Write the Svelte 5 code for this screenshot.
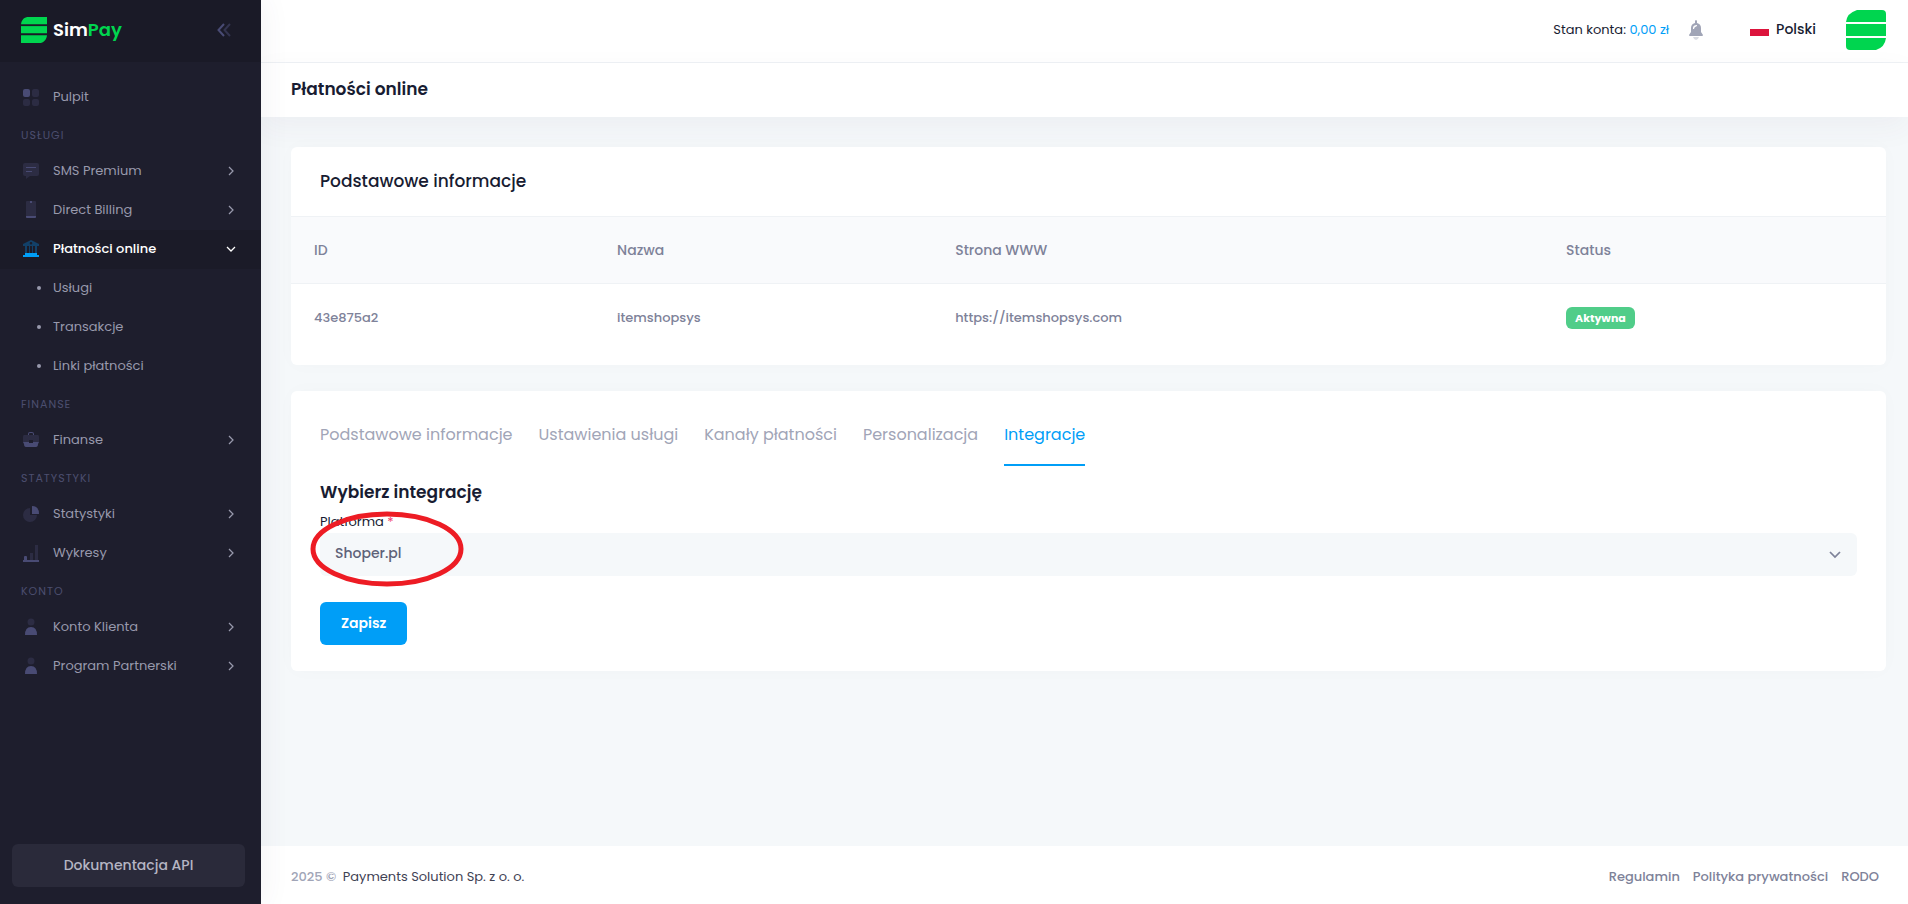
<script lang="ts">
	type Item = {label: string; icon: string; arrow?: boolean; children?: string[]};

	const sections: Array<{title?: string; items: Item[]}> = [
		{items: [{label: 'Pulpit', icon: 'grid'}]},
		{
			title: 'Usługi',
			items: [
				{label: 'SMS Premium', icon: 'chat', arrow: true},
				{label: 'Direct Billing', icon: 'phone', arrow: true},
				{label: 'Płatności online', icon: 'bank', arrow: true, children: ['Usługi', 'Transakcje', 'Linki płatności']},
			],
		},
		{title: 'Finanse', items: [{label: 'Finanse', icon: 'case', arrow: true}]},
		{
			title: 'Statystyki',
			items: [
				{label: 'Statystyki', icon: 'pie', arrow: true},
				{label: 'Wykresy', icon: 'bars', arrow: true},
			],
		},
		{
			title: 'Konto',
			items: [
				{label: 'Konto Klienta', icon: 'user', arrow: true},
				{label: 'Program Partnerski', icon: 'user', arrow: true},
			],
		},
	];

	const tabs = ['Podstawowe informacje', 'Ustawienia usługi', 'Kanały płatności', 'Personalizacja', 'Integracje'];
	const platforms = ['Shoper.pl', 'WooCommerce', 'PrestaShop'];
	const services = [{id: '43e875a2', name: 'itemshopsys', url: 'https://itemshopsys.com', status: 'Aktywna'}];

	let open = 'Płatności online';
	let tab = 'Integracje';
	let platform = 'Shoper.pl';

	function toggle(item: Item) {
		open = open === item.label ? '' : item.label;
	}
</script>

<div class="page">
	<aside class="aside">
		<div class="brand">
			<a href="#home" class="brand-logo">
				<svg width="26" height="26" viewBox="0 0 40 40" fill="#00d54f">
					<path d="M12 0H40V11H0C1 4 5 0 12 0Z" />
					<path d="M0 14H40V25H0Z" />
					<path d="M0 28H40C39 35 35 40 28 40H0Z" />
				</svg>
				<span class="brand-name">Sim<span class="green">Pay</span></span>
			</a>
			<button class="collapse" aria-label="Zwiń menu">
				<svg width="14" height="14" viewBox="0 0 14 14" fill="none" stroke-width="2">
					<path d="M13 1L7.500 7L13 13" stroke="#33344f" />
					<path d="M7 1L1.500 7L7 13" stroke="#494b74" />
				</svg>
			</button>
		</div>

		<nav class="menu">
			{#each sections as section}
				{#if section.title}
					<h4 class="menu-section">{section.title}</h4>
				{/if}
				{#each section.items as item}
					<button class="menu-link" class:active={item.children && open === item.label} on:click={() => toggle(item)}>
						<svg class="menu-icon" width="18" height="18" viewBox="0 0 18 18">
							{#if item.icon === 'grid'}
								<rect class="strong" x="1" y="1" width="7" height="8" rx="2" />
								<rect class="soft" x="10" y="1" width="7" height="8" rx="2" />
								<rect class="soft" x="1" y="11" width="7" height="7" rx="2" />
								<rect class="soft" x="10" y="11" width="7" height="7" rx="2" />
							{:else if item.icon === 'chat'}
								<path class="soft" d="M3 1H15Q17 1 17 3V12Q17 14 15 14H8L4 17V14H3Q1 14 1 12V3Q1 1 3 1Z" />
								<path class="strong" d="M4 5H14V6H4ZM4 9H10V10H4Z" />
							{:else if item.icon === 'phone'}
								<rect class="soft" x="4" y="0" width="10" height="17" rx="1" />
								<path class="strong" d="M4 15H14V16Q14 17 13 17H5Q4 17 4 16ZM8 0H10V2H8Z" />
							{:else if item.icon === 'bank'}
								<path class="soft" fill-rule="evenodd" d="M9 0L17 4V6H15V13H13V6H11V13H10V6H8V13H7V6H5V13H3V6H1V4ZM9 2A1.300 1.300 0 1 0 9 4.600A1.300 1.300 0 1 0 9 2Z" />
								<path class="strong" d="M3 13H15V15H17V17H1V15H3Z" />
							{:else if item.icon === 'case'}
								<path class="strong" d="M6 4V3Q6 1 8 1H10Q12 1 12 3V4H11V3Q11 2 10 2H8Q7 2 7 3V4Z" />
								<path class="soft" d="M2 4H16Q17 4 17 6V11H11V9H7V11H1V6Q1 4 2 4Z" />
								<path class="strong" d="M1 11H7V12H11V11H17L16 13Q16 16 14 16H4Q2 16 2 13Z" />
							{:else if item.icon === 'pie'}
								<path class="soft" d="M8 3V10H15A7 7 0 1 1 8 3Z" />
								<path class="strong" d="M10 1Q17 1 17 9H10Z" />
							{:else if item.icon === 'bars'}
								<path class="soft" d="M8 9H11V16H8ZM13 1H16V16H13Z" />
								<path class="strong" d="M2 13Q2 12 3 12H4Q5 12 5 13V16H17V18H1V16H2Z" />
							{:else}
								<circle class="soft" cx="9" cy="4" r="3.500" />
								<path class="strong" d="M3 17Q3 9 9 9Q15 9 15 17Z" />
							{/if}
						</svg>
						<span class="menu-text">{item.label}</span>
						{#if item.arrow}
							<svg class="arrow" width="10" height="10" viewBox="0 0 10 10" fill="none" stroke="currentColor" stroke-width="1.250">
								<path d="M3 1L7 5L3 9" />
							</svg>
						{/if}
					</button>
					{#if item.children && open === item.label}
						{#each item.children as child}
							<a class="menu-sub" href="#{child}"><span class="dot"></span>{child}</a>
						{/each}
					{/if}
				{/each}
			{/each}
		</nav>

		<a class="api" href="#api">Dokumentacja API</a>
	</aside>

	<div class="wrapper">
		<header class="topbar">
			<span class="balance">Stan konta: <span class="blue">0,00 zł</span></span>
			<button class="bell" aria-label="Powiadomienia">
				<svg width="14" height="20" viewBox="0 0 14 20" fill="#a1a5b7">
					<path d="M4 17H10Q9 20 7 20Q5 20 4 17Z" opacity=".4" />
					<path fill-rule="evenodd" d="M6 1Q7 -1 8 1V3Q12 4 12 8V12L14 15Q14 16 13 16H1Q0 16 0 15L2 12V8Q2 4 6 3ZM4 8Q4 5 8 5V6Q5 7 5 9H4Z" />
				</svg>
			</button>
			<button class="language">
				<svg width="19" height="14" viewBox="0 0 19 14">
					<rect width="19" height="7" fill="#fff" />
					<rect y="7" width="19" height="7" fill="#dc143c" />
				</svg>
				Polski
			</button>
			<a class="avatar" href="#profile" aria-label="Profil">
				<svg width="40" height="40" viewBox="0 0 40 40" fill="#00d54f">
					<path d="M11 0H36Q40 0 40 4V12H0Q1 3 11 0Z" />
					<path d="M0 14H40V26H0Z" />
					<path d="M0 28H40Q39 37 30 40H4Q0 40 0 36Z" />
				</svg>
			</a>
		</header>

		<div class="subheader">
			<h1>Płatności online</h1>
		</div>

		<main class="content">
			<section class="card">
				<h2 class="card-title">Podstawowe informacje</h2>
				<table>
					<thead>
						<tr>
							<th class="col-id">ID</th>
							<th class="col-name">Nazwa</th>
							<th class="col-url">Strona WWW</th>
							<th>Status</th>
						</tr>
					</thead>
					<tbody>
						{#each services as service}
							<tr>
								<td>{service.id}</td>
								<td>{service.name}</td>
								<td>{service.url}</td>
								<td><span class="badge">{service.status}</span></td>
							</tr>
						{/each}
					</tbody>
				</table>
			</section>

			<section class="card integration">
				<div class="tabs">
					{#each tabs as name}
						<button class="tab" class:active={tab === name} on:click={() => (tab = name)}>{name}</button>
					{/each}
				</div>
				<h3>Wybierz integrację</h3>
				<div class="field">
					<label for="platform">Platforma <span class="required">*</span></label>
					<div class="select">
						<select id="platform" bind:value={platform}>
							{#each platforms as name}
								<option>{name}</option>
							{/each}
						</select>
						<svg class="select-arrow" width="12" height="8" viewBox="0 0 12 8" fill="none" stroke="#7e8299" stroke-width="1.750">
							<path d="M1 1L6 6L11 1" />
						</svg>
					</div>
					<svg class="marker" width="154" height="76" viewBox="0 0 154 76" fill="none" stroke="#ed1c24" stroke-width="5">
						<ellipse cx="77" cy="38" rx="74" ry="35" />
					</svg>
				</div>
				<button class="save">Zapisz</button>
			</section>
		</main>

		<footer class="footer">
			<span><span class="year">2025 ©</span> <a class="company" href="#company">Payments Solution Sp. z o. o.</a></span>
			<div class="footer-links">
				<a href="#regulamin">Regulamin</a>
				<a href="#polityka">Polityka prywatności</a>
				<a href="#rodo">RODO</a>
			</div>
		</footer>
	</div>
</div>

<style>
	:global(body) {
		margin: 0;
		font-family: Poppins, Inter, "Liberation Sans", sans-serif;
		font-size: 13px;
		color: #181c32;
		background-color: #f5f8fa;
	}

	button,
	select {
		font: inherit;
		border: none;
		background: none;
		padding: 0;
		cursor: pointer;
	}

	a {
		text-decoration: none;
		color: inherit;
	}

	h1,
	h2,
	h3,
	h4 {
		margin: 0;
	}

	svg {
		flex-shrink: 0;
	}

	.page {
		display: flex;
		min-height: 100vh;
	}

	.aside {
		z-index: 1;
		display: flex;
		flex-direction: column;
		flex-shrink: 0;
		width: 261px;
		background-color: #1e1e2d;
		box-shadow: 0 0 28px rgba(82, 63, 105, .08);
	}

	.brand {
		display: flex;
		align-items: center;
		justify-content: space-between;
		height: 62px;
		box-sizing: border-box;
		padding: 0 30px 3px 21px;
		background-color: #1a1a27;
	}

	.brand-logo {
		display: flex;
		align-items: center;
		gap: 6px;
	}

	.brand-name {
		font-size: 18px;
		font-weight: 600;
		color: #fff;
	}

	.green {
		color: #00d54f;
	}

	.collapse {
		display: flex;
	}

	.menu {
		flex: 1;
		padding-top: 16px;
	}

	.menu-section {
		height: 35px;
		line-height: 37px;
		padding-left: 21px;
		font-size: 11px;
		font-weight: 400;
		letter-spacing: 1px;
		text-transform: uppercase;
		color: #4c4e6f;
	}

	.menu-link {
		display: flex;
		align-items: center;
		width: 100%;
		height: 39px;
		padding: 0 25px 2px 22px;
		text-align: left;
		color: #9899ac;
	}

	.menu-link.active {
		color: #fff;
		background-color: #1b1b28;
	}

	.menu-text {
		flex: 1;
		margin-left: 13px;
	}

	.active .menu-text {
		font-weight: 500;
	}

	.strong {
		fill: #494b74;
	}

	.soft {
		fill: #2c2c43;
	}

	.active .strong {
		fill: #009ef7;
	}

	.active .soft {
		fill: #124068;
	}

	.active .arrow {
		transform: rotate(90deg);
	}

	.menu-sub {
		display: flex;
		align-items: center;
		gap: 12px;
		height: 37px;
		padding: 0 0 2px 37px;
		color: #9899ac;
	}

	.dot {
		width: 4px;
		height: 4px;
		border-radius: 50%;
		background-color: #9899ac;
	}

	.api {
		margin: 16px 16px 17px 12px;
		border-radius: 6px;
		line-height: 43px;
		text-align: center;
		font-size: 14px;
		font-weight: 500;
		color: #b5b5c3;
		background-color: #2a2a3a;
	}

	.wrapper {
		display: flex;
		flex-direction: column;
		flex: 1;
		min-width: 0;
	}

	.topbar {
		display: flex;
		align-items: center;
		justify-content: flex-end;
		height: 62px;
		padding-right: 22px;
		border-bottom: 1px solid #eff2f5;
		background-color: #fff;
	}

	.balance {
		padding-bottom: 3px;
	}

	.blue {
		color: #009ef7;
	}

	.bell {
		display: flex;
		margin: 0 47px 2px 20px;
	}

	.language {
		display: flex;
		align-items: center;
		gap: 7px;
		margin-right: 30px;
		padding-bottom: 4px;
		font-size: 14px;
		font-weight: 500;
		color: #181c32;
	}

	.avatar {
		display: flex;
		padding-bottom: 2px;
	}

	.subheader {
		padding: 0 30px 2px;
		background-color: #fff;
		box-shadow: 0 10px 30px rgba(82, 63, 105, .05);
	}

	h1 {
		line-height: 52px;
		font-size: 17px;
		font-weight: 600;
	}

	.content {
		flex: 1;
		padding: 30px 22px 30px 30px;
	}

	.card {
		margin-bottom: 26px;
		border-radius: 6px;
		background-color: #fff;
		box-shadow: 0 0 20px rgba(76, 87, 125, .02);
	}

	.card-title {
		line-height: 69px;
		padding-left: 29px;
		border-bottom: 1px solid #eff2f5;
		font-size: 17px;
		font-weight: 500;
	}

	table {
		width: 100%;
		border-collapse: collapse;
		color: #7e8299;
	}

	th,
	td {
		height: 66px;
		padding: 0 23px;
		text-align: left;
		font-size: 14px;
		font-weight: 500;
	}

	td {
		height: 68px;
		padding-bottom: 13px;
		font-size: 13px;
	}

	th {
		border-bottom: 1px solid #eff2f5;
		background-color: #f9fafc;
	}

	.col-id {
		width: 19%;
	}

	.col-name {
		width: 21.2%;
	}

	.col-url {
		width: 38.3%;
	}

	.badge {
		display: inline-block;
		padding: 0 9px;
		border-radius: 6px;
		line-height: 22px;
		font-size: 11px;
		font-weight: 700;
		color: #fff;
		background-color: #50cd89;
	}

	.integration {
		padding: 26px 29px;
	}

	.tabs {
		display: flex;
		gap: 26px;
	}

	.tab {
		padding-bottom: 11px;
		border-bottom: 2px solid transparent;
		line-height: 36px;
		font-size: 16px;
		color: #a1a5b7;
	}

	.tab.active {
		border-color: #009ef7;
		color: #009ef7;
	}

	h3 {
		margin-top: 12px;
		line-height: 28px;
		font-size: 17px;
		font-weight: 600;
	}

	.field {
		position: relative;
		margin-bottom: 26px;
	}

	label {
		display: block;
		padding-top: 5px;
		line-height: 22px;
	}

	.required {
		color: #f1416c;
	}

	.select {
		display: grid;
		align-items: center;
	}

	select {
		grid-area: 1 / 1;
		width: 100%;
		height: 43px;
		padding: 0 15px 3px;
		border-radius: 6px;
		appearance: none;
		font-size: 14px;
		font-weight: 500;
		color: #5e6278;
		background-color: #f5f8fa;
	}

	.select-arrow {
		grid-area: 1 / 1;
		justify-self: end;
		margin-right: 16px;
		pointer-events: none;
	}

	.marker {
		position: absolute;
		top: 5px;
		left: -10px;
		pointer-events: none;
	}

	.save {
		display: block;
		padding: 0 21px;
		border-radius: 6px;
		line-height: 43px;
		font-size: 14px;
		font-weight: 600;
		color: #fff;
		background-color: #009ef7;
	}

	.footer {
		display: flex;
		align-items: center;
		justify-content: space-between;
		height: 55px;
		padding: 3px 29px 0 30px;
		background-color: #fff;
	}

	.year {
		margin-right: 3px;
		font-weight: 500;
		color: #a1a5b7;
	}

	.company {
		color: #3f4254;
	}

	.footer-links {
		display: flex;
		gap: 13px;
		font-weight: 500;
		color: #7e8299;
	}
</style>
